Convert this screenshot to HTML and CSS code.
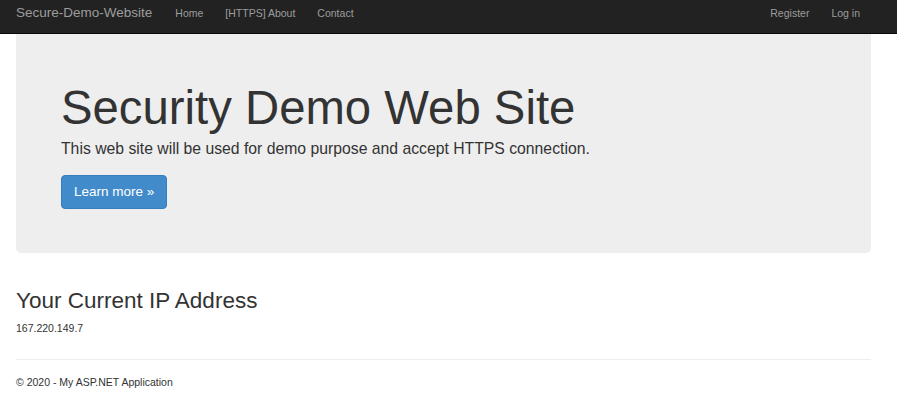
FILE: index.html
```html
<!DOCTYPE html>
<html lang="en">
<head>
<meta charset="utf-8">
<title>Secure-Demo-Website</title>
<link rel="stylesheet" href="styles.css">
</head>
<body>
<nav class="navbar">
  <div class="nav-left">
    <a class="brand" href="#">Secure-Demo-Website</a>
    <ul class="nav">
      <li><a href="#">Home</a></li>
      <li><a href="#">[HTTPS] About</a></li>
      <li><a href="#">Contact</a></li>
    </ul>
  </div>
  <ul class="nav">
    <li><a href="#">Register</a></li>
    <li><a href="#">Log in</a></li>
  </ul>
</nav>
<div class="container">
  <div class="jumbotron">
    <h1>Security Demo Web Site</h1>
    <p class="lead">This web site will be used for demo purpose and accept HTTPS connection.</p>
    <a class="btn" href="#">Learn more &raquo;</a>
  </div>
  <h2>Your Current IP Address</h2>
  <p class="ip">167.220.149.7</p>
  <hr>
  <footer class="footer">&copy; 2020 - My ASP.NET Application</footer>
</div>
</body>
</html>
```

FILE: styles.css
```css
* { box-sizing: border-box; }
body {
  margin: 0;
  font-family: "Liberation Sans", Arial, sans-serif;
  color: #333;
  background: #fff;
}
a { text-decoration: none; }
.navbar {
  height: 34px;
  background: #222;
  border-bottom: 1px solid #080808;
  display: flex;
  justify-content: space-between;
  align-items: flex-start;
  padding: 5px 26px 0 16px;
}
.nav-left { display: flex; align-items: center; }
.brand {
  color: #9d9d9d;
  font-size: 13.5px;
  line-height: 16px;
  margin-right: 12px;
}
.nav {
  list-style: none;
  margin: 0;
  padding: 0;
  display: flex;
}
.nav a {
  display: block;
  color: #9d9d9d;
  font-size: 10.5px;
  line-height: 16px;
  padding: 0 11px;
}
.container { padding: 0 26px 0 16px; }
.jumbotron {
  background: #eee;
  border-radius: 0 0 5px 5px;
  padding: 48px 45px 44px;
}
h1 {
  margin: 0;
  font-size: 47.3px;
  font-weight: 400;
  line-height: 1.1;
}
.lead {
  margin: 4px 0 15px;
  font-size: 15.75px;
  line-height: 1.4;
}
.btn {
  display: inline-block;
  background: #428bca;
  border: 1px solid #357ebd;
  color: #fff;
  font-size: 13.5px;
  padding: 8px 12px;
  line-height: 16px;
  border-radius: 4px;
}
h2 {
  margin: 36px 0 0;
  font-size: 22.5px;
  font-weight: 400;
  line-height: 1.1;
}
.ip {
  margin: 8px 0 0;
  font-size: 10.5px;
}
hr {
  margin: 25px 0 0;
  border: 0;
  border-top: 1px solid #eee;
}
.footer {
  font-size: 10.5px;
  margin-top: 16px;
}
```
